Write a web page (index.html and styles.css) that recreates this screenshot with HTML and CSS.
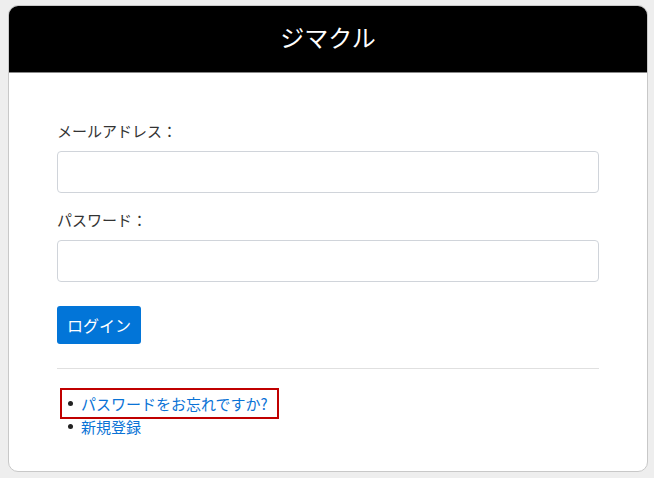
FILE: index.html
```html
<!DOCTYPE html>
<html lang="ja">
<head>
<meta charset="utf-8">
<link rel="stylesheet" href="styles.css">
</head>
<body>
<div class="card">
  <header class="card-header">ジマクル</header>
  <div class="card-body">
    <form class="form">
      <div class="field">
        <label class="label">メールアドレス：</label>
        <input class="input" type="text">
      </div>
      <div class="field">
        <label class="label">パスワード：</label>
        <input class="input" type="password">
      </div>
      <button class="btn" type="button">ログイン</button>
    </form>
    <hr class="divider">
    <ul class="links">
      <li class="link-item highlighted"><a href="#">パスワードをお忘れですか?</a></li>
      <li class="link-item"><a href="#">新規登録</a></li>
    </ul>
  </div>
</div>
</body>
</html>
```

FILE: styles.css
```css
html, body {
  margin: 0;
  padding: 0;
  background: #eeeeee;
}
body {
  padding: 5px 0 0 8px;
  font-family: "Noto Sans CJK JP", "Noto Sans", sans-serif;
  color: #333;
  font-size: 15px;
}
.card {
  width: 640px;
  background: #fff;
  border: 1px solid #c8c8c8;
  border-radius: 10px;
  box-sizing: border-box;
  height: 467px;
  overflow: hidden;
}
.card-header {
  background: #000;
  color: #fff;
  text-align: center;
  font-size: 24px;
  height: 62px;
  line-height: 62px;
  padding-bottom: 4px;
  border-bottom: 1px solid #888;
}
.card-body {
  padding: 47px 48px 0 48px;
}
.form {
  display: flex;
  flex-direction: column;
}
.field {
  display: flex;
  flex-direction: column;
}
.label {
  font-size: 15px;
  line-height: 22px;
  margin-bottom: 9px;
}
.input {
  height: 42px;
  border: 1px solid #d0d4da;
  border-radius: 4px;
  box-sizing: border-box;
  margin: 0 0 16px 0;
  font: inherit;
}
.btn {
  align-self: flex-start;
  margin-top: 8px;
  background: #0275d8;
  color: #fff;
  border: none;
  border-radius: 3px;
  height: 38px;
  padding: 0 10px;
  font-family: inherit;
  font-size: 16px;
}
.divider {
  border: none;
  border-top: 1px solid #e0e0e0;
  margin: 24px 0 0 0;
}
.links {
  margin: 23px 0 0 0;
  padding-left: 7px;
  font-size: 15px;
  line-height: 23px;
  list-style: none;
}
.link-item {
  display: flex;
  align-items: center;
  width: fit-content;
  padding: 0 7px 0 4px;
}
.link-item::before {
  content: "";
  width: 5px;
  height: 5px;
  border-radius: 50%;
  background: #222;
  margin-right: 8px;
  flex: none;
}
.link-item a {
  color: #0a73d6;
  text-decoration: none;
}
.highlighted {
  outline: 2px solid #c00000;
  outline-offset: 2px;
}
```
